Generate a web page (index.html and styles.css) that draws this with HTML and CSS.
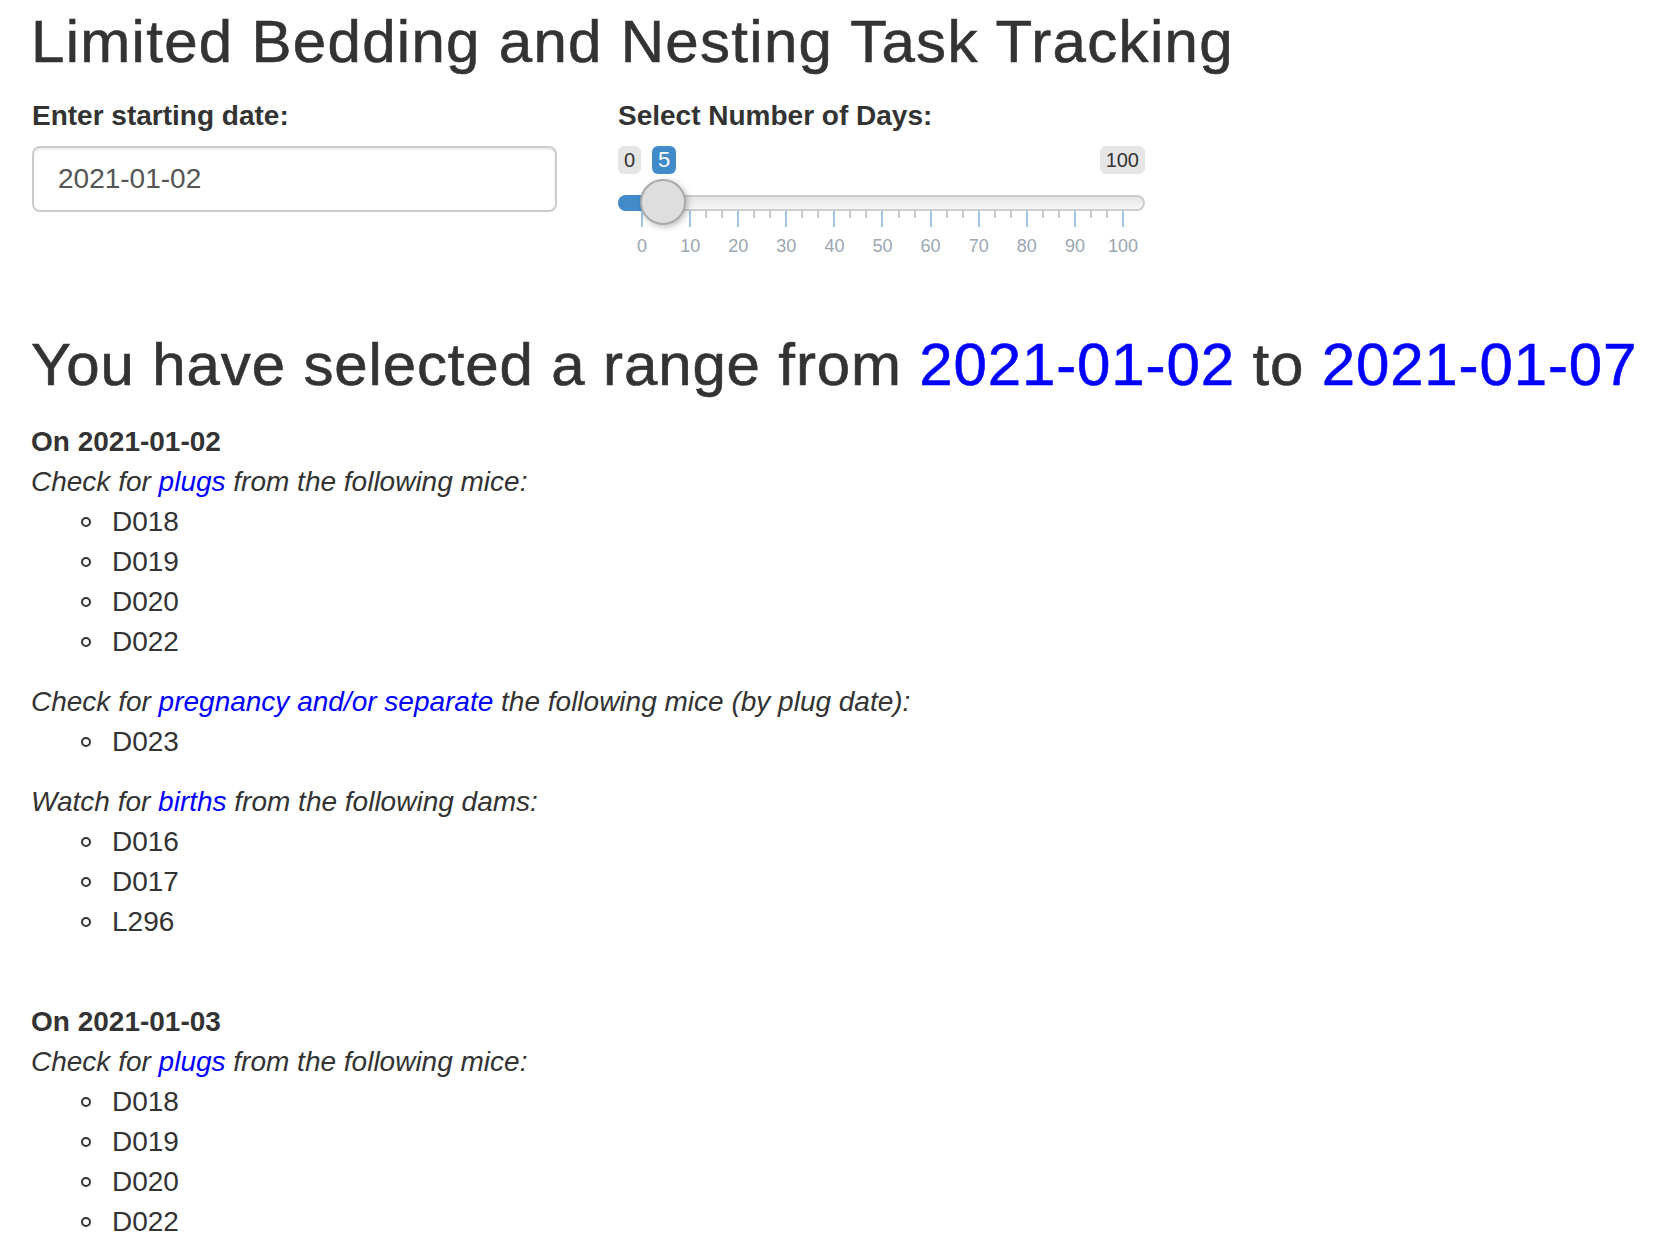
FILE: index.html
```html
<!DOCTYPE html>
<html>
<head>
<meta charset="utf-8">
<title>Limited Bedding and Nesting Task Tracking</title>
<link rel="stylesheet" href="styles.css">
</head>
<body>
<div class="container">
  <h2 class="title">Limited Bedding and Nesting Task Tracking</h2>

  <div class="controls">
    <div class="field field-date">
      <label class="control-label" for="start">Enter starting date:</label>
      <input id="start" class="form-control" type="text" value="2021-01-02">
    </div>
    <div class="field field-slider">
      <label class="control-label">Select Number of Days:</label>
      <div class="irs">
        <span class="irs-min">0</span>
        <span class="irs-single">5</span>
        <span class="irs-max">100</span>
        <span class="irs-line"></span>
        <span class="irs-bar"></span>
        <span class="irs-handle"></span>
        <span class="irs-grid-lines"></span>
        <div class="irs-grid-text">
          <span>0</span><span>10</span><span>20</span><span>30</span><span>40</span><span>50</span><span>60</span><span>70</span><span>80</span><span>90</span><span>100</span>
        </div>
      </div>
    </div>
  </div>

  <h2 class="range">You have selected a range from <span class="blue">2021-01-02</span> to <span class="blue">2021-01-07</span></h2>

  <div class="day">
    <b>On 2021-01-02</b><br>
    <i>Check for <span class="blue">plugs</span> from the following mice:</i>
    <ul>
      <li>D018</li>
      <li>D019</li>
      <li>D020</li>
      <li>D022</li>
    </ul>
    <i>Check for <span class="blue">pregnancy and/or separate</span> the following mice (by plug date):</i>
    <ul>
      <li>D023</li>
    </ul>
    <i>Watch for <span class="blue">births</span> from the following dams:</i>
    <ul>
      <li>D016</li>
      <li>D017</li>
      <li>L296</li>
    </ul>
    <br>
  </div>

  <div class="day">
    <b>On 2021-01-03</b><br>
    <i>Check for <span class="blue">plugs</span> from the following mice:</i>
    <ul>
      <li>D018</li>
      <li>D019</li>
      <li>D020</li>
      <li>D022</li>
    </ul>
  </div>
</div>
</body>
</html>
```

FILE: styles.css
```css
html, body {
  margin: 0;
  padding: 0;
  background: #fff;
}

body {
  font-family: "Liberation Sans", Arial, Helvetica, sans-serif;
  font-size: 28px;
  line-height: 40px;
  color: #333;
}

.container {
  padding: 0 30px 0 31px;
}

h2 {
  font-size: 60px;
  font-weight: 500;
  line-height: 66px;
  margin: 0;
  -webkit-text-stroke-width: 0.6px;
}

.title {
  margin-top: 9px;
  margin-bottom: 21px;
  letter-spacing: 1.3px;
}

.controls {
  display: flex;
  gap: 61px;
  padding-left: 1px;
}

.field {
  display: flex;
  flex-direction: column;
}

.field-date {
  width: 525px;
}

.field-slider {
  width: 527px;
}

.control-label {
  display: block;
  font-weight: 700;
  margin-bottom: 10px;
}

.form-control {
  box-sizing: border-box;
  width: 100%;
  height: 66px;
  padding: 12px 24px;
  font-family: inherit;
  font-size: 28px;
  color: #555;
  background: #fff;
  border: 2px solid #ccc;
  border-radius: 8px;
  box-shadow: inset 0 2px 2px rgba(0, 0, 0, 0.075);
  outline: none;
}

/* slider */
.irs {
  position: relative;
  height: 118px;
}

.irs-min,
.irs-max,
.irs-single {
  position: absolute;
  top: 0;
  height: 28px;
  line-height: 28px;
  padding: 0 6px;
  border-radius: 6px;
  font-size: 20px;
  color: #333;
  background: rgba(0, 0, 0, 0.1);
}

.irs-min { left: 0; }
.irs-max { right: 0; }

.irs-single {
  left: 34px;
  font-size: 22px;
  color: #fff;
  background: #428bca;
}

.irs-line {
  position: absolute;
  left: 0;
  right: 0;
  top: 49px;
  height: 16px;
  box-sizing: border-box;
  border: 2px solid #ccc;
  border-radius: 16px;
  background: linear-gradient(to bottom, #ddd -50%, #fff 150%);
}

.irs-bar {
  position: absolute;
  left: 0;
  width: 48px;
  top: 49px;
  height: 16px;
  background: #428bca;
  border-radius: 16px 0 0 16px;
}

.irs-handle {
  position: absolute;
  left: 22px;
  top: 33px;
  width: 46px;
  height: 46px;
  box-sizing: border-box;
  border: 2px solid #aaa;
  border-radius: 50%;
  background: #dedede;
  box-shadow: 2px 2px 6px rgba(0, 0, 0, 0.25);
  z-index: 2;
}

.irs-grid-lines {
  position: absolute;
  left: 23px;
  top: 65px;
  width: 484px;
  height: 16px;
  background:
    repeating-linear-gradient(90deg, #a3c6e6 0 2px, transparent 2px 48.1px) 0 0 / 100% 16px no-repeat,
    repeating-linear-gradient(90deg, #c8c8c8 0 2px, transparent 2px 16.0333px) 0 0 / 100% 7px no-repeat;
}

.irs-grid-text {
  position: absolute;
  left: 0;
  top: 88px;
  width: 529px;
  display: flex;
  font-size: 18px;
  line-height: 24px;
  color: #9aa6b2;
}

.irs-grid-text span {
  flex: 1;
  text-align: center;
}

.range {
  margin-top: 68px;
  margin-bottom: 24px;
  letter-spacing: 0.86px;
  white-space: nowrap;
}

.blue {
  color: #0000ff;
}

.day b {
  font-weight: 700;
}

ul {
  margin: 0 0 20px;
  padding-left: 81px;
  list-style: none;
}

li {
  position: relative;
}

li::before {
  content: "";
  position: absolute;
  left: -31px;
  top: 15px;
  width: 10px;
  height: 10px;
  box-sizing: border-box;
  border: 2.5px solid #333;
  border-radius: 50%;
}
```
